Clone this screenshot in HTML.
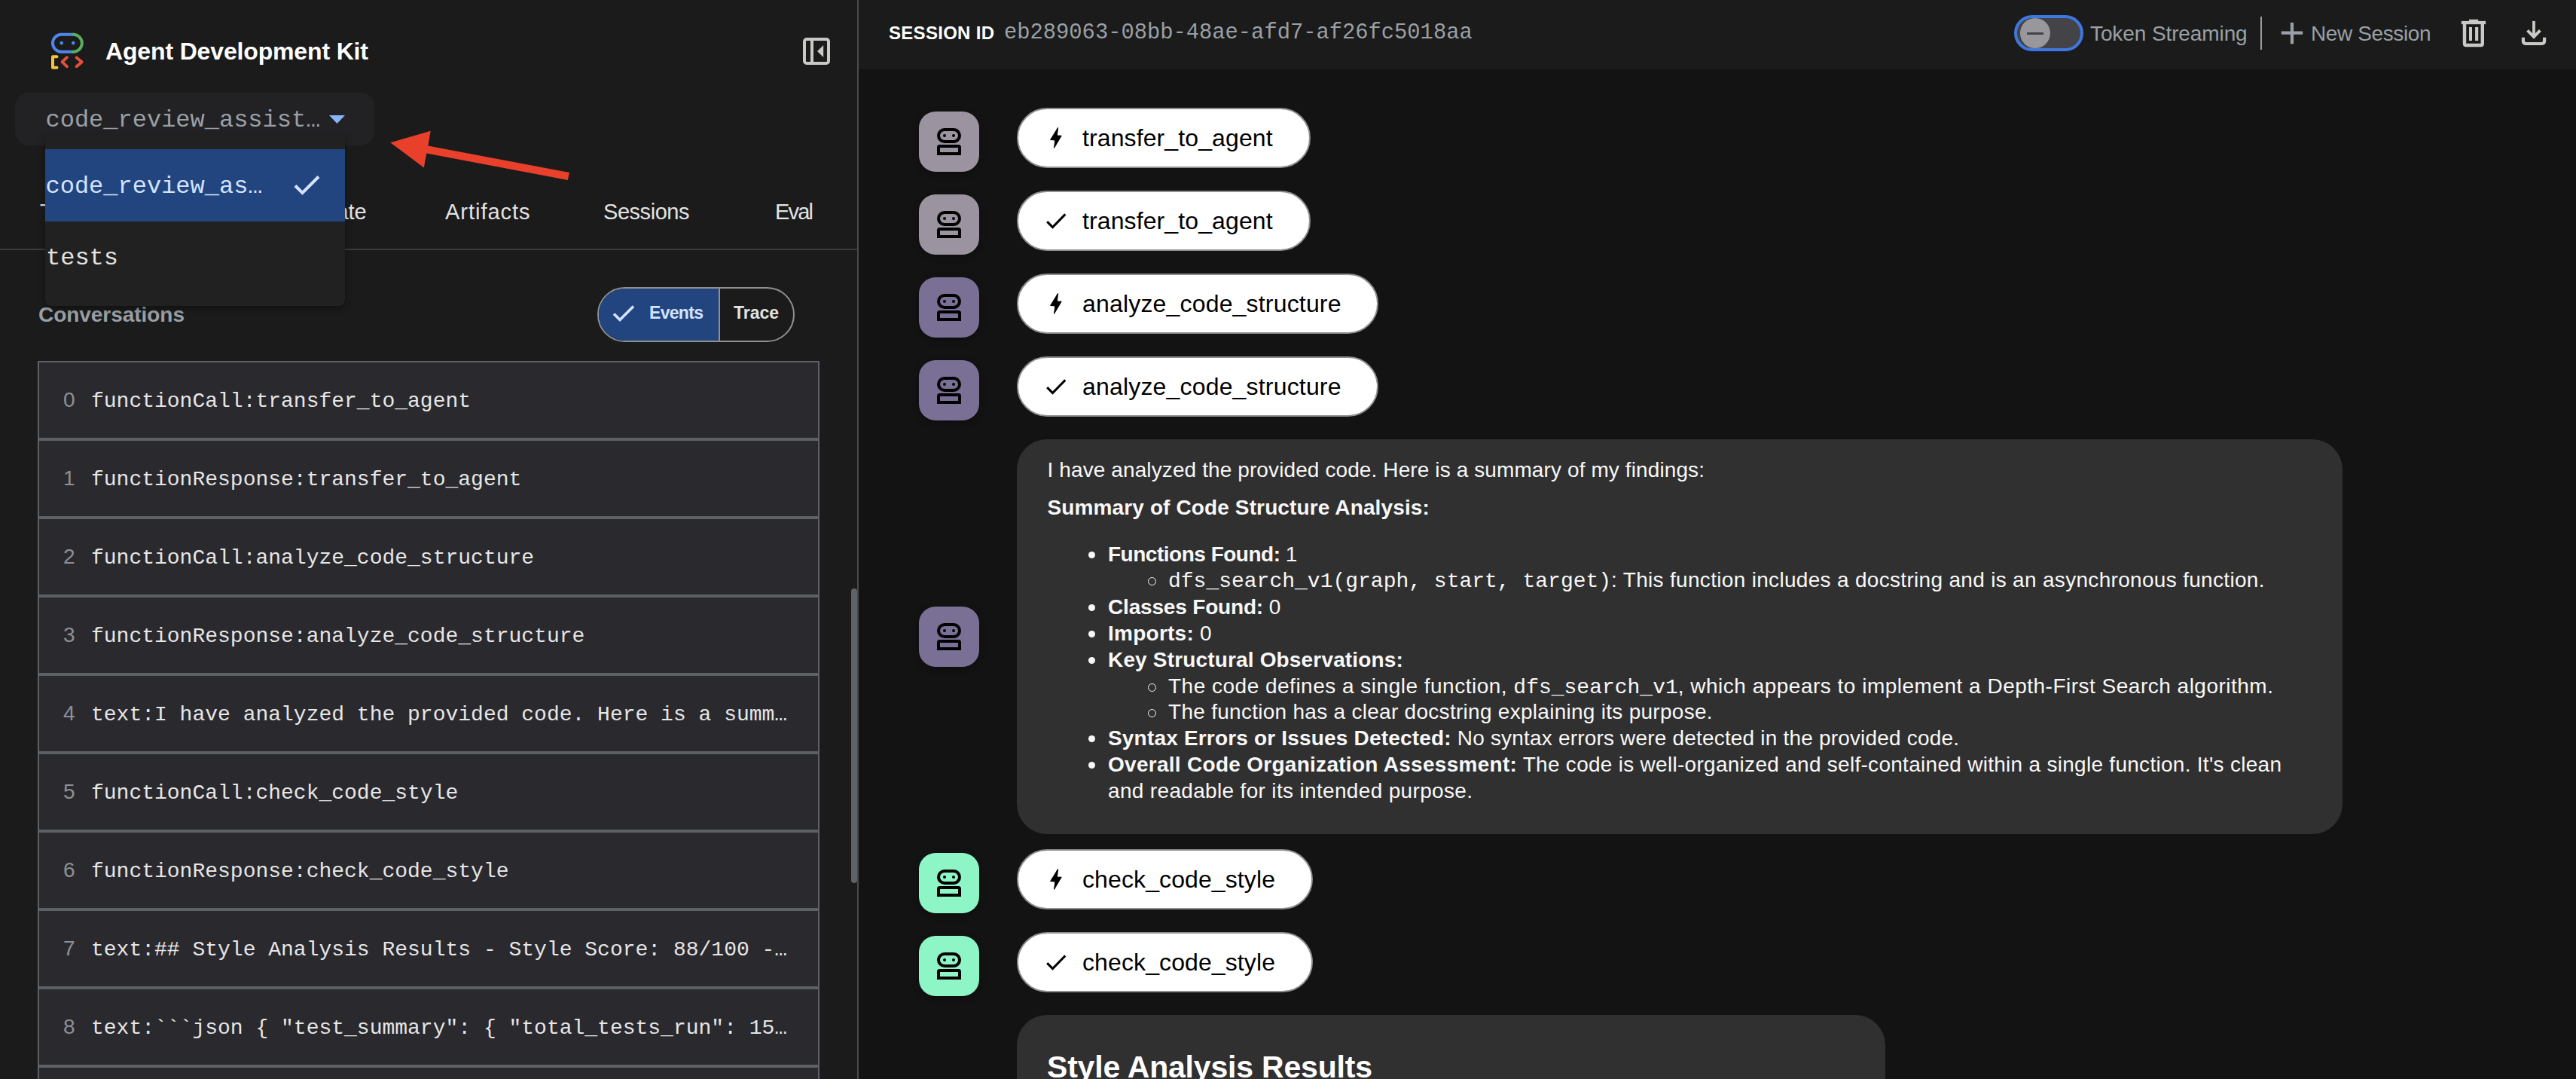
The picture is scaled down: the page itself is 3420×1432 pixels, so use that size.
<!DOCTYPE html>
<html><head><meta charset="utf-8">
<style>
*{box-sizing:border-box;margin:0;padding:0}
html,body{width:3420px;height:1432px;overflow:hidden;background:#131313;font-family:"Liberation Sans",sans-serif;position:relative}
.abs{position:absolute}
#side{position:absolute;left:0;top:0;width:1138px;height:1432px;background:#1b1b1b}
#sideborder{position:absolute;left:1138px;top:0;width:2px;height:1432px;background:#484b4a}
#topbar{position:absolute;left:1140px;top:0;width:2280px;height:92px;background:#1b1b1b}
.tx{position:absolute;white-space:pre}
.tx code{font-family:"Liberation Mono",monospace;letter-spacing:0}
.row{position:absolute;left:50px;width:1038px;height:104px;background:#2a292e;border:2px solid #5d6064}
.av{position:absolute;left:1220px;width:80px;height:80px;border-radius:22px;box-shadow:0 3px 10px rgba(0,0,0,.3)}
.av svg{position:absolute;left:0;top:0}
.chip{position:absolute;left:1350px;height:80px;background:#fff;border:2px solid #8f8f8f;border-radius:40px}
.chip .ct{position:absolute;left:85px;top:0;line-height:76px;font-size:32px;color:#000;white-space:pre}
.chip svg{position:absolute}
.bub{position:absolute;left:1350px;background:#303030;border-radius:40px}
.dot{position:absolute;width:9px;height:9px;border-radius:50%;background:#f8f8f8}
.circ{position:absolute;width:11px;height:11px;border-radius:50%;border:1.5px solid #f8f8f8}
</style></head><body>
<div id="side"></div><div id="sideborder"></div><div id="topbar"></div>
<svg class="abs" style="left:60px;top:36px" width="60" height="60" viewBox="0 0 60 60" fill="none" stroke-linecap="round" stroke-linejoin="round">
<path d="M37.35 9.8 H21.45 A11.45 11.45 0 0 0 21.45 32.7 H37.35" stroke="#4f86ec" stroke-width="4"/>
<path d="M37.35 9.8 A11.45 11.45 0 0 1 37.35 32.7" stroke="#5aad5e" stroke-width="4"/>
<circle cx="21.7" cy="21.1" r="2.3" fill="#4f86ec"/><circle cx="37.2" cy="21.1" r="2.3" fill="#4f86ec"/>
<path d="M15.5 39.2 H10 V53.8 H15.5" stroke="#f5c342" stroke-width="4"/>
<path d="M28.9 40.2 L22.6 46.2 L28.9 52.3" stroke="#e0523e" stroke-width="3.9"/>
<path d="M41.6 40.4 L48.7 46.3 L41.6 52.3" stroke="#e0523e" stroke-width="3.9"/>
</svg>
<div class="tx" id="t_title" style="left:140px;top:48.71px;font-size:32px;line-height:38.40px;color:#ffffff;font-weight:700;letter-spacing:-0.152px;">Agent Development Kit</div>
<svg class="abs" style="left:1066px;top:50px" width="36" height="36" viewBox="0 0 36 36" fill="none">
<rect x="2" y="2" width="32" height="32" rx="3" stroke="#c8cac6" stroke-width="4"/>
<rect x="10" y="2" width="4" height="32" fill="#c8cac6"/>
<path d="M19 18 L27.2 10 V26 Z" fill="#c8cac6"/>
</svg>
<div class="tx" style="left:53px;top:263.55px;font-size:29px;line-height:34.80px;color:#e3e3e3;font-weight:400;">Trace</div>
<div class="tx" style="left:419px;top:263.55px;font-size:29px;line-height:34.80px;color:#e3e3e3;font-weight:400;">State</div>
<div class="tx" id="t_artifacts" style="left:591px;top:263.55px;font-size:29px;line-height:34.80px;color:#e3e3e3;font-weight:400;letter-spacing:0.981px;">Artifacts</div>
<div class="tx" id="t_sessions" style="left:801px;top:263.55px;font-size:29px;line-height:34.80px;color:#e3e3e3;font-weight:400;letter-spacing:-0.453px;">Sessions</div>
<div class="tx" id="t_eval" style="left:1029px;top:263.55px;font-size:29px;line-height:34.80px;color:#e3e3e3;font-weight:400;letter-spacing:-1.807px;">Eval</div>
<div class="abs" style="left:0;top:330px;width:1138px;height:2px;background:#3c3c3c"></div>
<div class="tx" id="t_conv" style="left:51px;top:401.49px;font-size:28px;line-height:33.60px;color:#9aa0a6;font-weight:700;letter-spacing:-0.042px;">Conversations</div>
<div class="abs" style="left:793px;top:381px;width:262px;height:73px;border:2px solid #8e918f;border-radius:37px;overflow:hidden">
<div class="abs" style="left:0;top:0;width:159px;height:69px;background:#224580"></div>
<div class="abs" style="left:159px;top:0;width:2px;height:69px;background:#8e918f"></div>
</div>
<svg class="abs" style="left:812px;top:402px" width="32" height="28" viewBox="0 0 32 28" fill="none"><path d="M3 14.5 L11 22.5 L29 4.5" stroke="#d3e3fd" stroke-width="3.6"/></svg>
<div class="tx" id="t_events" style="left:862px;top:401.73px;font-size:23px;line-height:27.60px;color:#d3e3fd;font-weight:700;letter-spacing:-0.688px;">Events</div>
<div class="tx" id="t_trace" style="left:974px;top:401.73px;font-size:23px;line-height:27.60px;color:#e3e3e3;font-weight:700;letter-spacing:-0.027px;">Trace</div>
<div class="row" style="top:479px"></div>
<div class="tx" style="left:84px;top:514.09px;font-size:28px;line-height:33.60px;color:#8d9196;font-weight:400;">0</div>
<div class="tx" style="left:121px;top:516.35px;font-size:28px;line-height:33.60px;color:#e6e6e6;font-weight:400;font-family:'Liberation Mono',monospace;">functionCall:transfer_to_agent</div>
<div class="row" style="top:583px"></div>
<div class="tx" style="left:84px;top:618.09px;font-size:28px;line-height:33.60px;color:#8d9196;font-weight:400;">1</div>
<div class="tx" style="left:121px;top:620.35px;font-size:28px;line-height:33.60px;color:#e6e6e6;font-weight:400;font-family:'Liberation Mono',monospace;">functionResponse:transfer_to_agent</div>
<div class="row" style="top:687px"></div>
<div class="tx" style="left:84px;top:722.09px;font-size:28px;line-height:33.60px;color:#8d9196;font-weight:400;">2</div>
<div class="tx" style="left:121px;top:724.35px;font-size:28px;line-height:33.60px;color:#e6e6e6;font-weight:400;font-family:'Liberation Mono',monospace;">functionCall:analyze_code_structure</div>
<div class="row" style="top:791px"></div>
<div class="tx" style="left:84px;top:826.09px;font-size:28px;line-height:33.60px;color:#8d9196;font-weight:400;">3</div>
<div class="tx" style="left:121px;top:828.35px;font-size:28px;line-height:33.60px;color:#e6e6e6;font-weight:400;font-family:'Liberation Mono',monospace;">functionResponse:analyze_code_structure</div>
<div class="row" style="top:895px"></div>
<div class="tx" style="left:84px;top:930.09px;font-size:28px;line-height:33.60px;color:#8d9196;font-weight:400;">4</div>
<div class="tx" style="left:121px;top:932.35px;font-size:28px;line-height:33.60px;color:#e6e6e6;font-weight:400;font-family:'Liberation Mono',monospace;">text:I have analyzed the provided code. Here is a summ…</div>
<div class="row" style="top:999px"></div>
<div class="tx" style="left:84px;top:1034.09px;font-size:28px;line-height:33.60px;color:#8d9196;font-weight:400;">5</div>
<div class="tx" style="left:121px;top:1036.35px;font-size:28px;line-height:33.60px;color:#e6e6e6;font-weight:400;font-family:'Liberation Mono',monospace;">functionCall:check_code_style</div>
<div class="row" style="top:1103px"></div>
<div class="tx" style="left:84px;top:1138.09px;font-size:28px;line-height:33.60px;color:#8d9196;font-weight:400;">6</div>
<div class="tx" style="left:121px;top:1140.35px;font-size:28px;line-height:33.60px;color:#e6e6e6;font-weight:400;font-family:'Liberation Mono',monospace;">functionResponse:check_code_style</div>
<div class="row" style="top:1207px"></div>
<div class="tx" style="left:84px;top:1242.09px;font-size:28px;line-height:33.60px;color:#8d9196;font-weight:400;">7</div>
<div class="tx" style="left:121px;top:1244.35px;font-size:28px;line-height:33.60px;color:#e6e6e6;font-weight:400;font-family:'Liberation Mono',monospace;">text:## Style Analysis Results - Style Score: 88/100 -…</div>
<div class="row" style="top:1311px"></div>
<div class="tx" style="left:84px;top:1346.09px;font-size:28px;line-height:33.60px;color:#8d9196;font-weight:400;">8</div>
<div class="tx" style="left:121px;top:1348.35px;font-size:28px;line-height:33.60px;color:#e6e6e6;font-weight:400;font-family:'Liberation Mono',monospace;">text:```json { "test_summary": { "total_tests_run": 15…</div>
<div class="row" style="top:1415px"></div>
<div class="tx" style="left:84px;top:1450.09px;font-size:28px;line-height:33.60px;color:#8d9196;font-weight:400;">9</div>
<div class="tx" style="left:121px;top:1452.35px;font-size:28px;line-height:33.60px;color:#e6e6e6;font-weight:400;font-family:'Liberation Mono',monospace;">functionCall:run_tests</div>
<div class="abs" style="left:1130px;top:781px;width:8px;height:391px;border-radius:4px;background:#5f6368"></div>
<div class="abs" style="left:20px;top:123px;width:477px;height:70px;border-radius:18px;background:#222225"></div>
<div class="tx" style="left:60.5px;top:141.28px;font-size:32px;line-height:38.40px;color:#9aa0a6;font-weight:400;font-family:'Liberation Mono',monospace;">code_review_assist…</div>
<svg class="abs" style="left:437px;top:153px" width="22" height="12" viewBox="0 0 22 12"><path d="M0 0 H21 L10.5 11 Z" fill="#8ab4f8"/></svg>
<div class="abs" style="left:60px;top:179px;width:398px;height:227px;background:#212121;border-radius:0 0 8px 8px;box-shadow:0 4px 10px rgba(0,0,0,.35)">
<div class="abs" style="left:0;top:19px;width:398px;height:96px;background:#224580"></div>
</div>
<div class="tx" style="left:60.5px;top:228.98px;font-size:32px;line-height:38.40px;color:#d3e3fd;font-weight:400;font-family:'Liberation Mono',monospace;">code_review_as…</div>
<svg class="abs" style="left:388px;top:230px" width="40" height="32" viewBox="0 0 40 32" fill="none"><path d="M4 16.5 L13.5 26 L35 4.5" stroke="#d3e3fd" stroke-width="4"/></svg>
<div class="tx" style="left:61px;top:324.28px;font-size:32px;line-height:38.40px;color:#e3e3e3;font-weight:400;font-family:'Liberation Mono',monospace;">tests</div>
<svg class="abs" style="left:0;top:0" width="800" height="260" viewBox="0 0 800 260"><path d="M518.3 189.3 L571.7 173.7 L568.3 193.5 L756 229.1 L753.8 238.9 L566.3 203.5 L562.8 222.6 Z" fill="#e8402a"/></svg>
<div class="tx" id="t_sid" style="left:1180px;top:29.68px;font-size:24px;line-height:28.80px;color:#ffffff;font-weight:700;letter-spacing:0.292px;">SESSION ID</div>
<div class="tx" id="t_sidval" style="left:1333px;top:27.46px;font-size:28.8px;line-height:34.56px;color:#9aa0a6;font-weight:400;font-family:'Liberation Mono',monospace;letter-spacing:-0.012px;">eb289063-08bb-48ae-afd7-af26fc5018aa</div>
<div class="abs" style="left:2674px;top:20px;width:92px;height:48px;border-radius:24px;background:#444448;border:4px solid #3d78e0"></div>
<div class="abs" style="left:2682px;top:24px;width:40px;height:40px;border-radius:20px;background:#98989c"></div>
<div class="abs" style="left:2691px;top:42.5px;width:22px;height:3px;background:#444448"></div>
<div class="tx" id="t_tok" style="left:2775px;top:27.99px;font-size:28px;line-height:33.60px;color:#9aa0a6;font-weight:400;letter-spacing:-0.101px;">Token Streaming</div>
<div class="abs" style="left:3001px;top:22px;width:2.4px;height:44px;background:#9a9d9f"></div>
<svg class="abs" style="left:3028px;top:29px" width="30" height="30" viewBox="0 0 30 30"><path d="M15 1 V29.2 M0.8 14.6 H29.2" stroke="#9aa0a6" stroke-width="4.2"/></svg>
<div class="tx" id="t_newsess" style="left:3068px;top:27.99px;font-size:28px;line-height:33.60px;color:#9aa0a6;font-weight:400;letter-spacing:-0.391px;">New Session</div>
<svg class="abs" style="left:3260px;top:20px" width="50" height="50" viewBox="0 0 50 50" fill="none">
<rect x="7.8" y="7.9" width="32.3" height="4.3" fill="#c8cac6"/>
<rect x="18" y="5.8" width="12.2" height="2.5" fill="#c8cac6"/>
<path d="M12 12 V38 Q12 40 14 40 H33.8 Q35.8 40 35.8 38 V12" stroke="#c8cac6" stroke-width="4.4"/>
<rect x="18" y="16" width="4" height="18" fill="#c8cac6"/><rect x="26.1" y="16" width="4.1" height="18" fill="#c8cac6"/>
</svg>
<svg class="abs" style="left:3340px;top:20px" width="50" height="50" viewBox="0 0 50 50" fill="none">
<path d="M24 7.9 V30" stroke="#c8cac6" stroke-width="3.8"/>
<path d="M15.6 20.4 L24 28.8 L32.4 20.4" stroke="#c8cac6" stroke-width="4"/>
<path d="M9.9 29.8 V34 Q9.9 38 13.9 38 H34.1 Q38.1 38 38.1 34 V29.8" stroke="#c8cac6" stroke-width="4.2"/>
</svg>
<div class="av" style="top:148px;background:#9b939f"><svg width="80" height="80" viewBox="0 0 80 80" fill="none">
<rect x="26" y="24" width="28" height="16" rx="8" stroke="#000" stroke-width="4"/>
<circle cx="34" cy="32" r="2" fill="#000"/><circle cx="46" cy="32" r="2" fill="#000"/>
<path d="M24 58 V47.5 Q24 44 27.5 44 H52.5 Q56 44 56 47.5 V58 Z M28 48 V54 H52 V48 Z" fill="#000" fill-rule="evenodd"/>
</svg></div>
<div class="chip" style="top:143px;width:390px"><svg style="left:0;top:0" width="80" height="76" viewBox="0 0 80 76"><path d="M52.6 24.3 L42.6 40.5 L48.9 41 L47.5 51.4 L57.2 35.2 L51.4 35 Z" fill="#000" stroke="#000" stroke-width="1" stroke-linejoin="round"/></svg></div>
<div class="tx" id="t_chip143" style="left:1437px;top:164.21px;font-size:32px;line-height:38.40px;color:#000000;font-weight:400;letter-spacing:0.110px;">transfer_to_agent</div>
<div class="av" style="top:258px;background:#9b939f"><svg width="80" height="80" viewBox="0 0 80 80" fill="none">
<rect x="26" y="24" width="28" height="16" rx="8" stroke="#000" stroke-width="4"/>
<circle cx="34" cy="32" r="2" fill="#000"/><circle cx="46" cy="32" r="2" fill="#000"/>
<path d="M24 58 V47.5 Q24 44 27.5 44 H52.5 Q56 44 56 47.5 V58 Z M28 48 V54 H52 V48 Z" fill="#000" fill-rule="evenodd"/>
</svg></div>
<div class="chip" style="top:253px;width:390px"><svg style="left:0;top:0" width="80" height="76" viewBox="0 0 80 76" fill="none"><path d="M38.2 39.1 L45.5 46.5 L62.3 29.4" stroke="#000" stroke-width="3"/></svg></div>
<div class="tx" id="t_chip253" style="left:1437px;top:274.21px;font-size:32px;line-height:38.40px;color:#000000;font-weight:400;letter-spacing:0.110px;">transfer_to_agent</div>
<div class="av" style="top:368px;background:#7a7096"><svg width="80" height="80" viewBox="0 0 80 80" fill="none">
<rect x="26" y="24" width="28" height="16" rx="8" stroke="#000" stroke-width="4"/>
<circle cx="34" cy="32" r="2" fill="#000"/><circle cx="46" cy="32" r="2" fill="#000"/>
<path d="M24 58 V47.5 Q24 44 27.5 44 H52.5 Q56 44 56 47.5 V58 Z M28 48 V54 H52 V48 Z" fill="#000" fill-rule="evenodd"/>
</svg></div>
<div class="chip" style="top:363px;width:480px"><svg style="left:0;top:0" width="80" height="76" viewBox="0 0 80 76"><path d="M52.6 24.3 L42.6 40.5 L48.9 41 L47.5 51.4 L57.2 35.2 L51.4 35 Z" fill="#000" stroke="#000" stroke-width="1" stroke-linejoin="round"/></svg></div>
<div class="tx" id="t_chip363" style="left:1437px;top:384.21px;font-size:32px;line-height:38.40px;color:#000000;font-weight:400;letter-spacing:0.178px;">analyze_code_structure</div>
<div class="av" style="top:478px;background:#7a7096"><svg width="80" height="80" viewBox="0 0 80 80" fill="none">
<rect x="26" y="24" width="28" height="16" rx="8" stroke="#000" stroke-width="4"/>
<circle cx="34" cy="32" r="2" fill="#000"/><circle cx="46" cy="32" r="2" fill="#000"/>
<path d="M24 58 V47.5 Q24 44 27.5 44 H52.5 Q56 44 56 47.5 V58 Z M28 48 V54 H52 V48 Z" fill="#000" fill-rule="evenodd"/>
</svg></div>
<div class="chip" style="top:473px;width:480px"><svg style="left:0;top:0" width="80" height="76" viewBox="0 0 80 76" fill="none"><path d="M38.2 39.1 L45.5 46.5 L62.3 29.4" stroke="#000" stroke-width="3"/></svg></div>
<div class="tx" id="t_chip473" style="left:1437px;top:494.21px;font-size:32px;line-height:38.40px;color:#000000;font-weight:400;letter-spacing:0.178px;">analyze_code_structure</div>
<div class="av" style="top:805px;background:#7a7096"><svg width="80" height="80" viewBox="0 0 80 80" fill="none">
<rect x="26" y="24" width="28" height="16" rx="8" stroke="#000" stroke-width="4"/>
<circle cx="34" cy="32" r="2" fill="#000"/><circle cx="46" cy="32" r="2" fill="#000"/>
<path d="M24 58 V47.5 Q24 44 27.5 44 H52.5 Q56 44 56 47.5 V58 Z M28 48 V54 H52 V48 Z" fill="#000" fill-rule="evenodd"/>
</svg></div>
<div class="bub" style="top:583px;width:1760px;height:524px"></div>
<div class="tx" id="t_p0" style="left:1390.5px;top:607.49px;font-size:28px;line-height:33.60px;color:#f8f8f8;font-weight:400;letter-spacing:0.107px;">I have analyzed the provided code. Here is a summary of my findings:</div>
<div class="tx" id="t_p1" style="left:1390.5px;top:656.89px;font-size:28px;line-height:33.60px;color:#f8f8f8;font-weight:400;letter-spacing:0.124px;"><b>Summary of Code Structure Analysis:</b></div>
<div class="dot" style="left:1444.7px;top:732.4px"></div>
<div class="tx" id="t_l0" style="left:1471px;top:719.39px;font-size:28px;line-height:33.60px;color:#f8f8f8;font-weight:400;letter-spacing:-0.491px;"><b>Functions Found:</b> 1</div>
<div class="circ" style="left:1523.8px;top:766.0px"></div>
<div class="tx" id="t_l1" style="left:1551px;top:753.09px;font-size:28px;line-height:33.60px;color:#f8f8f8;font-weight:400;letter-spacing:0.311px;"><code>dfs_search_v1(graph, start, target)</code>: This function includes a docstring and is an asynchronous function.</div>
<div class="dot" style="left:1444.7px;top:801.8px"></div>
<div class="tx" id="t_l2" style="left:1471px;top:788.79px;font-size:28px;line-height:33.60px;color:#f8f8f8;font-weight:400;letter-spacing:-0.176px;"><b>Classes Found:</b> 0</div>
<div class="dot" style="left:1444.7px;top:836.8px"></div>
<div class="tx" id="t_l3" style="left:1471px;top:823.79px;font-size:28px;line-height:33.60px;color:#f8f8f8;font-weight:400;letter-spacing:0.249px;"><b>Imports:</b> 0</div>
<div class="dot" style="left:1444.7px;top:872.2px"></div>
<div class="tx" id="t_l4" style="left:1471px;top:859.19px;font-size:28px;line-height:33.60px;color:#f8f8f8;font-weight:400;letter-spacing:0.165px;"><b>Key Structural Observations:</b></div>
<div class="circ" style="left:1523.8px;top:907.0px"></div>
<div class="tx" id="t_l5" style="left:1551px;top:894.09px;font-size:28px;line-height:33.60px;color:#f8f8f8;font-weight:400;letter-spacing:0.495px;">The code defines a single function, <code>dfs_search_v1</code>, which appears to implement a Depth-First Search algorithm.</div>
<div class="circ" style="left:1523.8px;top:941.2px"></div>
<div class="tx" id="t_l6" style="left:1551px;top:928.29px;font-size:28px;line-height:33.60px;color:#f8f8f8;font-weight:400;letter-spacing:0.280px;">The function has a clear docstring explaining its purpose.</div>
<div class="dot" style="left:1444.7px;top:976.3px"></div>
<div class="tx" id="t_l7" style="left:1471px;top:963.29px;font-size:28px;line-height:33.60px;color:#f8f8f8;font-weight:400;letter-spacing:0.184px;"><b>Syntax Errors or Issues Detected:</b> No syntax errors were detected in the provided code.</div>
<div class="dot" style="left:1444.7px;top:1011.2px"></div>
<div class="tx" id="t_l8" style="left:1471px;top:998.19px;font-size:28px;line-height:33.60px;color:#f8f8f8;font-weight:400;letter-spacing:0.283px;"><b>Overall Code Organization Assessment:</b> The code is well-organized and self-contained within a single function. It's clean</div>
<div class="tx" id="t_l9" style="left:1471px;top:1033.09px;font-size:28px;line-height:33.60px;color:#f8f8f8;font-weight:400;letter-spacing:0.333px;">and readable for its intended purpose.</div>
<div class="av" style="top:1132px;background:#8ef5c6"><svg width="80" height="80" viewBox="0 0 80 80" fill="none">
<rect x="26" y="24" width="28" height="16" rx="8" stroke="#000" stroke-width="4"/>
<circle cx="34" cy="32" r="2" fill="#000"/><circle cx="46" cy="32" r="2" fill="#000"/>
<path d="M24 58 V47.5 Q24 44 27.5 44 H52.5 Q56 44 56 47.5 V58 Z M28 48 V54 H52 V48 Z" fill="#000" fill-rule="evenodd"/>
</svg></div>
<div class="chip" style="top:1127px;width:393px"><svg style="left:0;top:0" width="80" height="76" viewBox="0 0 80 76"><path d="M52.6 24.3 L42.6 40.5 L48.9 41 L47.5 51.4 L57.2 35.2 L51.4 35 Z" fill="#000" stroke="#000" stroke-width="1" stroke-linejoin="round"/></svg></div>
<div class="tx" id="t_chip1127" style="left:1437px;top:1148.21px;font-size:32px;line-height:38.40px;color:#000000;font-weight:400;letter-spacing:0.108px;">check_code_style</div>
<div class="av" style="top:1242px;background:#8ef5c6"><svg width="80" height="80" viewBox="0 0 80 80" fill="none">
<rect x="26" y="24" width="28" height="16" rx="8" stroke="#000" stroke-width="4"/>
<circle cx="34" cy="32" r="2" fill="#000"/><circle cx="46" cy="32" r="2" fill="#000"/>
<path d="M24 58 V47.5 Q24 44 27.5 44 H52.5 Q56 44 56 47.5 V58 Z M28 48 V54 H52 V48 Z" fill="#000" fill-rule="evenodd"/>
</svg></div>
<div class="chip" style="top:1237px;width:393px"><svg style="left:0;top:0" width="80" height="76" viewBox="0 0 80 76" fill="none"><path d="M38.2 39.1 L45.5 46.5 L62.3 29.4" stroke="#000" stroke-width="3"/></svg></div>
<div class="tx" id="t_chip1237" style="left:1437px;top:1258.21px;font-size:32px;line-height:38.40px;color:#000000;font-weight:400;letter-spacing:0.108px;">check_code_style</div>
<div class="bub" style="top:1347px;width:1153px;height:400px"></div>
<div class="tx" id="t_style" style="left:1390px;top:1392.19px;font-size:41px;line-height:49.20px;color:#ffffff;font-weight:700;letter-spacing:-0.191px;">Style Analysis Results</div>
</body></html>
